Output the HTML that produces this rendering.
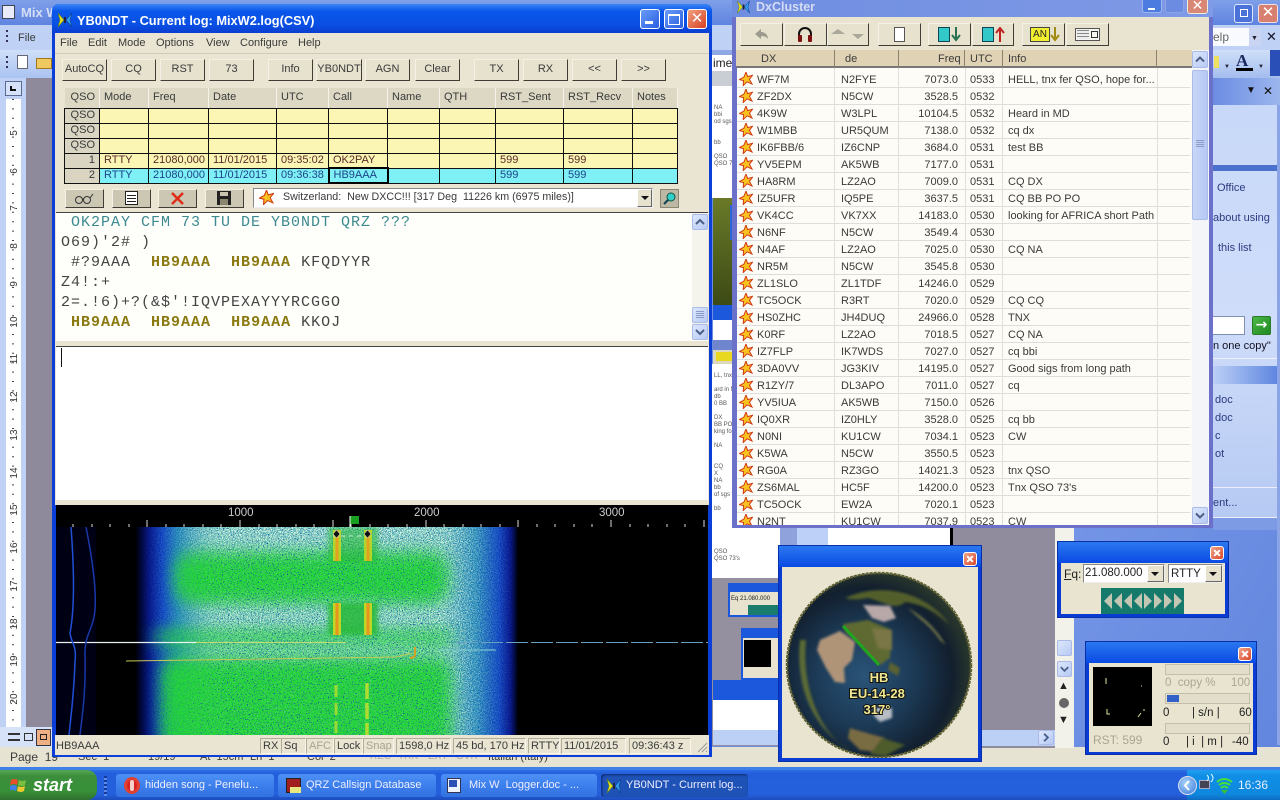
<!DOCTYPE html>
<html><head><meta charset="utf-8"><title>MixW</title>
<style>
*{box-sizing:border-box}
html{background:#6d8fe2}
html,body{margin:0;padding:0;width:1280px;height:800px;overflow:hidden;font:11px "Liberation Sans",sans-serif;color:#222}
body{background:#6d8fe2;filter:blur(.3px)}
.a,.b,.t,.sb,.cl{position:absolute}
.t{white-space:pre;line-height:14px}
.b{background:#e6e2ce;border:1px solid;border-color:#f4f2e6 #3f3d34 #3f3d34 #f4f2e6;text-align:center;color:#3a3a3a;font-size:11px;line-height:19px;white-space:pre}
.sb{background:linear-gradient(135deg,#dde7fd,#b7c9f3);border:1px solid #a9bbe6;border-radius:2px}
.cl{background:linear-gradient(135deg,#f0a58c,#d8482a);border:1px solid #fff;border-radius:3px;width:14px;height:14px}
.cl:after{content:"";position:absolute;left:2px;top:5px;width:8px;height:2px;background:#fff;transform:rotate(45deg)}
.cl:before{content:"";position:absolute;left:2px;top:5px;width:8px;height:2px;background:#fff;transform:rotate(-45deg)}
table{border-collapse:collapse;table-layout:fixed;position:absolute;left:64px;top:88px;width:613px;font-size:11px}
td,th{padding:0 4px;height:15px;border:1px solid #111;font-weight:normal;text-align:left;white-space:nowrap;overflow:hidden;line-height:13px}
th{height:20px;background:#dcd8c4;border:0;border-right:1px solid #f5f3e8;border-bottom:1px solid #111;color:#3a3a3a;font-size:11px}
.h{background:#d9d5c2;text-align:right;color:#3a3a3a;border-color:#111}
.y td{background:#fbf6b4;color:#5a2a2a}.y td.h{background:#d9d5c2;color:#3a3a3a}
.c td{background:#7ff0f6;color:#1c4488}.c td.h{background:#d9d5c2;color:#3a3a3a}
.r{position:absolute;left:0;width:453px;height:17px;border-bottom:1px solid #ddd;font-size:11px;line-height:17px;color:#3a3a3a;white-space:nowrap}
.r span{position:absolute;top:1px}
.r svg{position:absolute;left:2px;top:1px}
.r span:nth-of-type(1){left:20px}.r span:nth-of-type(2){left:104px}.r span:nth-of-type(3){width:60px;left:161px;text-align:right}.r span:nth-of-type(4){left:233px}.r span:nth-of-type(5){left:271px}
.m{font:15px/20px "Liberation Mono",monospace;letter-spacing:1px;color:#444;white-space:pre;position:absolute;left:61px}
.m b{color:#8b7a12}
.st{position:absolute;top:738px;height:16px;line-height:15px;font-size:11px;color:#3a3a3a;border:1px solid;border-color:#b0ac98 #f8f6ec #f8f6ec #b0ac98;white-space:pre;padding:0 2px}
.w{font-size:11px;color:#3a3a3a}
.tp{color:#2a3a80;font-size:11px}
.task{position:absolute;top:774px;height:23px;border-radius:3px;background:linear-gradient(#4c90f6,#3a7cea 60%,#3272e0);color:#eef;font-size:11px;line-height:23px;white-space:pre}
.d{position:absolute;font-size:6px;line-height:7px;color:#555;white-space:pre}
</style></head><body>
<svg width="0" height="0" style="position:absolute"><defs>
<symbol id="s" viewBox="0 0 14 14"><polygon points="7,0 8.6,4.6 13.6,3.2 10.4,7.2 13,12 8,9.8 4.2,13.6 4.6,8.6 .4,7.6 5,5" fill="#fbc320" stroke="#d03a14" stroke-width="1"/></symbol>
<symbol id="bf" viewBox="0 0 16 16"><path d="M1 1L7 8L1 15L3 8Z" fill="#e8e020" stroke="#608020" stroke-width=".6"/><path d="M15 1L9 8L15 15L13 8Z" fill="#30a0f0" stroke="#104090" stroke-width=".6"/><rect x="7" y="5" width="2" height="6" fill="#224"/></symbol>
<symbol id="up" viewBox="0 0 14 14"><path d="M3 9L7 5L11 9" fill="none" stroke="#4a5f88" stroke-width="2"/></symbol>
<symbol id="dn" viewBox="0 0 14 14"><path d="M3 5L7 9L11 5" fill="none" stroke="#4a5f88" stroke-width="2"/></symbol>
</defs></svg>

<!-- Word background -->
<div class="a" style="left:0;top:0;width:1280px;height:25px;background:linear-gradient(#7f9fe8,#5f84e0)"></div>
<div class="a" style="left:0;top:25px;width:1280px;height:25px;background:#bfd2f6"></div>
<div class="a" style="left:0;top:50px;width:1280px;height:28px;background:linear-gradient(#cfdff9,#a9c2f0)"></div>
<div class="a" style="left:2px;top:5px;width:13px;height:14px;background:#e8ecf8;border:1px solid #445"></div>
<div class="t" style="left:21px;top:6px;color:#d5def5;font-size:13px;font-weight:bold">Mix W</div>
<div class="a" style="left:6px;top:30px;width:2px;height:14px;background:repeating-linear-gradient(#335 0 2px,transparent 2px 5px)"></div>
<div class="t w" style="left:18px;top:31px">File</div>
<div class="a" style="left:6px;top:56px;width:2px;height:14px;background:repeating-linear-gradient(#335 0 2px,transparent 2px 5px)"></div>
<div class="a" style="left:17px;top:55px;width:11px;height:14px;background:#fff;border:1px solid #667"></div>
<div class="a" style="left:36px;top:58px;width:16px;height:11px;background:#f0c860;border:1px solid #a07820"></div>
<div class="a" style="left:0;top:78px;width:26px;height:650px;background:#bfd2f6"></div>
<div class="a" style="left:5px;top:81px;width:17px;height:15px;background:#d5e2f9;border:1px solid #5a6a90"></div>
<div class="a" style="left:10px;top:86px;width:6px;height:5px;border-left:2px solid #111;border-bottom:2px solid #111"></div>
<div class="a" style="left:6px;top:99px;width:15px;height:628px;background:#fff"></div>
<div class="a" style="left:26px;top:78px;width:26px;height:650px;background:#8f8a9b"></div>
<svg class="a" style="left:6px;top:99px" width="15" height="628"><g font-family="Liberation Sans" font-size="10" fill="#333" text-anchor="middle">
<text transform="translate(11,34) rotate(-90)">5</text><text transform="translate(11,72) rotate(-90)">6</text><text transform="translate(11,109) rotate(-90)">7</text><text transform="translate(11,147) rotate(-90)">8</text><text transform="translate(11,185) rotate(-90)">9</text><text transform="translate(11,223) rotate(-90)">10</text><text transform="translate(11,260) rotate(-90)">11</text><text transform="translate(11,298) rotate(-90)">12</text><text transform="translate(11,336) rotate(-90)">13</text><text transform="translate(11,374) rotate(-90)">14</text><text transform="translate(11,411) rotate(-90)">15</text><text transform="translate(11,449) rotate(-90)">16</text><text transform="translate(11,487) rotate(-90)">17</text><text transform="translate(11,525) rotate(-90)">18</text><text transform="translate(11,562) rotate(-90)">19</text><text transform="translate(11,600) rotate(-90)">20</text></g>
<path d="M7 0V628" stroke="#444" stroke-width="2" stroke-dasharray="1 8.4"/></svg>
<div class="a" style="left:0;top:727px;width:52px;height:21px;background:#d6e2f8"></div>
<div class="a" style="left:8px;top:733px;width:12px;height:8px;border-top:2px solid #333;border-bottom:2px solid #333"></div>
<div class="a" style="left:24px;top:733px;width:9px;height:8px;border:1px solid #333"></div>
<div class="a" style="left:36px;top:729px;width:15px;height:17px;background:#efb183;border:1px solid #334"></div>
<div class="a" style="left:40px;top:734px;width:7px;height:6px;border:1px solid #222"></div>
<!-- word status -->
<div class="a" style="left:0;top:747px;width:1280px;height:21px;background:#e7e3d2"></div>
<div class="a" style="left:0;top:767px;width:1280px;height:3px;background:#3f7fe8"></div>
<div class="t w" style="left:10px;top:750px;font-size:12px">Page  19</div>
<div class="t w" style="left:78px;top:750px">Sec  1</div><div class="t w" style="left:148px;top:750px">19/19</div>
<div class="t w" style="left:200px;top:750px">At  15cm</div><div class="t w" style="left:250px;top:750px">Ln  1</div><div class="t w" style="left:307px;top:750px">Col  2</div>
<div class="t" style="left:370px;top:750px;color:#aaa;font-size:10px">REC</div><div class="t" style="left:398px;top:750px;color:#aaa;font-size:10px">TRK</div><div class="t" style="left:428px;top:750px;color:#aaa;font-size:10px">EXT</div><div class="t" style="left:456px;top:750px;color:#aaa;font-size:10px">OVR</div><div class="t w" style="left:488px;top:750px">Italian (Italy)</div>

<!-- doc sliver -->
<div class="a" style="left:712px;top:50px;width:24px;height:5px;background:#8fa8e4"></div>
<div class="a" style="left:712px;top:55px;width:24px;height:16px;background:#fff"></div>
<div class="t" style="left:713px;top:56px;font-size:12px">imes</div>
<div class="a" style="left:712px;top:71px;width:24px;height:15px;background:#c9cdd4"></div>
<div class="a" style="left:712px;top:86px;width:24px;height:112px;background:#fff"></div>
<div class="d" style="left:714px;top:105px">NA
bbi
od sgs f


bb

QSO
QSO 7</div>
<div class="a" style="left:713px;top:198px;width:23px;height:107px;background:linear-gradient(#6a7a28,#3c4a14)"></div>
<div class="a" style="left:730px;top:205px;width:2px;height:35px;background:#2a66d8"></div>
<div class="a" style="left:713px;top:305px;width:23px;height:15px;background:#1c58dc"></div>
<div class="a" style="left:713px;top:320px;width:23px;height:20px;background:#fff"></div>
<div class="a" style="left:713px;top:340px;width:23px;height:10px;background:#6f86cf"></div>
<div class="a" style="left:713px;top:350px;width:23px;height:14px;background:#dcd8c0"></div>
<div class="a" style="left:716px;top:352px;width:16px;height:9px;background:#e8d820"></div>
<div class="a" style="left:712px;top:364px;width:24px;height:214px;background:#fff"></div>
<div class="d" style="left:714px;top:373px">LL, tnx f

ard in M
db
0 BB

DX
BB PO
king for

NA


CQ
X
NA
bb
of sgs f

bb


QSO
QSO 73</div>
<div class="a" style="left:712px;top:520px;width:68px;height:58px;background:#fff"></div>
<div class="d" style="left:714px;top:549px">QSO
QSO 73's</div>
<div class="a" style="left:712px;top:578px;width:70px;height:168px;background:#9490a0"></div>
<div class="a" style="left:728px;top:583px;width:52px;height:34px;background:#1c58dc"></div>
<div class="a" style="left:730px;top:592px;width:50px;height:23px;background:#e6e2ce"></div>
<div class="t" style="left:731px;top:592px;font-size:6px">Eq 21.080.000</div>
<div class="a" style="left:748px;top:605px;width:32px;height:10px;background:#1a7c6c"></div>
<div class="a" style="left:741px;top:628px;width:41px;height:52px;background:#1c58dc"></div>
<div class="a" style="left:743px;top:638px;width:39px;height:40px;background:#e6e2ce"></div>
<div class="a" style="left:744px;top:640px;width:27px;height:27px;background:#000"></div>
<div class="a" style="left:713px;top:680px;width:68px;height:20px;background:#1c58dc"></div>
<div class="a" style="left:713px;top:700px;width:68px;height:30px;background:#fff"></div>
<div class="a" style="left:713px;top:730px;width:70px;height:15px;background:#bcd0f6"></div>
<!-- between -->
<div class="a" style="left:780px;top:526px;width:17px;height:20px;background:#8fa2dc"></div>
<div class="a" style="left:797px;top:526px;width:31px;height:20px;background:#bcd0f8"></div>
<div class="a" style="left:828px;top:526px;width:122px;height:20px;background:#fff"></div>
<div class="a" style="left:950px;top:526px;width:3px;height:20px;background:#000"></div>
<div class="a" style="left:953px;top:526px;width:102px;height:222px;background:#918c9d"></div>
<div class="a" style="left:982px;top:730px;width:78px;height:16px;background:#bcd0f6"></div>
<div class="sb" style="left:1038px;top:730px;width:16px;height:15px"><svg width="14" height="13" style="transform:rotate(90deg)"><use href="#up"/></svg></div>
<div class="a" style="left:1055px;top:526px;width:19px;height:222px;background:#f2f2ea"></div>
<div class="sb" style="left:1057px;top:640px;width:15px;height:16px"></div>
<div class="sb" style="left:1057px;top:661px;width:15px;height:16px"><svg width="13" height="14"><use href="#dn"/></svg></div>
<div class="t" style="left:1058px;top:679px;font-size:11px">&#9650;</div>
<div class="a" style="left:1059px;top:698px;width:10px;height:10px;border-radius:50%;background:#666"></div>
<div class="t" style="left:1058px;top:713px;font-size:11px">&#9660;</div>
<div class="a" style="left:1074px;top:526px;width:206px;height:221px;background:linear-gradient(120deg,#7495e6,#6286de)"></div>

<!-- Word right -->
<div class="a" style="left:1234px;top:4px;width:19px;height:19px;background:#4a72d8;border:1px solid #dfe7fb;border-radius:3px"></div>
<div class="a" style="left:1240px;top:9px;width:8px;height:8px;border:1.5px solid #fff"></div>
<div class="a" style="left:1258px;top:4px;width:20px;height:19px;background:#d88070;border:1px solid #f4e0e0;border-radius:3px;color:#fff;font-size:15px;line-height:16px;text-align:center">&#10005;</div>
<div class="a" style="left:1213px;top:28px;width:36px;height:18px;background:#f8fafe"></div>
<div class="t" style="left:1213px;top:30px;color:#666;font-size:12px">elp</div>
<div class="a" style="left:1249px;top:28px;width:12px;height:18px;background:#c8d4f2"></div>
<div class="t" style="left:1251px;top:32px;font-size:7px;color:#223">&#9660;</div>
<div class="t" style="left:1266px;top:30px;font-size:13px;color:#112">&#10005;</div>
<div class="a" style="left:1213px;top:50px;width:67px;height:28px;background:linear-gradient(#cfdff9,#a4bdee)"></div>
<div class="a" style="left:1214px;top:56px;width:5px;height:12px;background:#f0e060"></div>
<div class="t" style="left:1224px;top:60px;font-size:6px;color:#223">&#9660;</div>
<div class="t" style="left:1236px;top:52px;font:bold 17px 'Liberation Serif',serif;line-height:17px;color:#1a2860">A</div>
<div class="a" style="left:1236px;top:68px;width:17px;height:3px;background:#000"></div>
<div class="t" style="left:1258px;top:60px;font-size:6px;color:#223">&#9660;</div>
<div class="a" style="left:1270px;top:50px;width:10px;height:26px;background:#2a50b8"></div>
<div class="a" style="left:1213px;top:78px;width:67px;height:27px;background:linear-gradient(90deg,#6b8de2,#9cb6ee)"></div>
<div class="t" style="left:1246px;top:84px;font-size:10px;color:#111">&#9660;</div>
<div class="t" style="left:1263px;top:84px;font-size:12px;color:#111">&#10005;</div>
<div class="a" style="left:1213px;top:105px;width:64px;height:425px;background:linear-gradient(#c8d8f8,#cfddfa 50%,#b4c8f2)"></div>
<div class="a" style="left:1277px;top:105px;width:3px;height:640px;background:#8aa4e6"></div>
<div class="a" style="left:1213px;top:165px;width:64px;height:6px;background:#4a72cc"></div>
<div class="t tp" style="left:1217px;top:181px">Office</div>
<div class="t tp" style="left:1213px;top:211px">about using</div>
<div class="t tp" style="left:1218px;top:241px">this list</div>
<div class="a" style="left:1213px;top:316px;width:32px;height:19px;background:#fff;border:1px solid #8090b0;border-left:0"></div>
<div class="a" style="left:1252px;top:316px;width:19px;height:19px;background:linear-gradient(135deg,#4cb848,#1e8a20);border:1px solid #2a7a2a;border-radius:2px;color:#fff;font:bold 14px/16px 'DejaVu Sans',sans-serif;text-align:center">&#8594;</div>
<div class="t" style="left:1213px;top:339px;color:#112;font-size:11px">n one copy"</div>
<div class="a" style="left:1213px;top:358px;width:64px;height:1px;background:#eef"></div>
<div class="a" style="left:1213px;top:366px;width:64px;height:18px;background:linear-gradient(90deg,#bcd0f6,#5f86e0)"></div>
<div class="t tp" style="left:1215px;top:393px">doc</div>
<div class="t tp" style="left:1215px;top:411px">doc</div>
<div class="t tp" style="left:1215px;top:429px">c</div>
<div class="t tp" style="left:1215px;top:447px">ot</div>
<div class="a" style="left:1213px;top:487px;width:64px;height:1px;background:#eef"></div>
<div class="t tp" style="left:1213px;top:496px">ent...</div>
<div class="a" style="left:1213px;top:517px;width:64px;height:1px;background:#eef"></div>
<div class="a" style="left:1213px;top:518px;width:64px;height:12px;background:#7d9ae4"></div>

<!-- DxCluster -->
<div class="a" style="left:732px;top:-20px;width:481px;height:548px;background:#6b70c9;border-radius:6px 6px 0 0"></div>
<div class="a" style="left:732px;top:0;width:481px;height:17px;background:linear-gradient(90deg,#6f8de0,#7f9ae6)"></div>
<svg class="a" style="left:736px;top:0" width="15" height="14"><use href="#bf"/></svg>
<div class="t" style="left:756px;top:0;color:#d3dcf4;font:bold 12.5px/14px 'Liberation Sans',sans-serif">DxCluster</div>
<div class="a" style="left:1142px;top:-3px;width:20px;height:16px;background:#4d7ce0;border-radius:3px;border:1px solid #9db6ee"></div>
<div class="a" style="left:1148px;top:8px;width:7px;height:2px;background:#fff"></div>
<div class="a" style="left:1165px;top:-3px;width:19px;height:16px;background:#6b8ce0;border-radius:3px;border:1px solid #8aa4e6"></div>
<div class="a" style="left:1187px;top:-3px;width:21px;height:17px;background:#d98876;border-radius:3px;border:1px solid #eed;color:#fff;font-size:14px;line-height:15px;text-align:center">&#10005;</div>
<div class="a" style="left:736px;top:17px;width:473px;height:33px;background:#e8e4d0"></div>
<!-- dx toolbar -->
<div class="b" style="left:740px;top:23px;width:43px;height:23px"></div>
<svg class="a" style="left:753px;top:27px" width="18" height="14"><path d="M8 2L2 7L8 12V9C11 9 14 10 15 12C15 8 12 5 8 5Z" fill="#9b9a8c"/></svg>
<div class="b" style="left:784px;top:23px;width:43px;height:23px"></div>
<svg class="a" style="left:796px;top:26px" width="18" height="17"><path d="M3 11V8A6 6 0 0 1 15 8V11" fill="none" stroke="#111" stroke-width="2"/><rect x="2" y="9" width="4" height="7" rx="1" fill="#7a1010"/><rect x="12" y="9" width="4" height="7" rx="1" fill="#7a1010"/></svg>
<div class="b" style="left:827px;top:23px;width:42px;height:23px"></div>
<svg class="a" style="left:830px;top:28px" width="36" height="12"><path d="M1 6L8 1L15 6H34L28 11L22 6" fill="#aaa89a"/></svg>
<div class="b" style="left:878px;top:23px;width:43px;height:23px"></div>
<div class="a" style="left:894px;top:27px;width:11px;height:15px;background:#fff;border:1px solid #555"></div>
<div class="b" style="left:928px;top:23px;width:43px;height:23px"></div>
<div class="a" style="left:938px;top:27px;width:12px;height:15px;background:#32c8c8;border:1px solid #145"></div>
<svg class="a" style="left:951px;top:27px" width="10" height="15"><path d="M5 0V11M1 8L5 13L9 8" fill="none" stroke="#287050" stroke-width="2"/></svg>
<div class="b" style="left:972px;top:23px;width:42px;height:23px"></div>
<div class="a" style="left:982px;top:27px;width:12px;height:15px;background:#32c8c8;border:1px solid #145"></div>
<svg class="a" style="left:995px;top:27px" width="10" height="15"><path d="M5 15V3M1 6L5 1L9 6" fill="none" stroke="#c02020" stroke-width="2"/></svg>
<div class="b" style="left:1022px;top:23px;width:43px;height:23px"></div>
<div class="a" style="left:1030px;top:27px;width:20px;height:15px;background:#f2ee30;border:1px solid #444;font-size:10px;line-height:13px;text-align:center">AN</div>
<svg class="a" style="left:1050px;top:27px" width="10" height="15"><path d="M5 0V11M1 8L5 13L9 8" fill="none" stroke="#a08a10" stroke-width="2"/></svg>
<div class="b" style="left:1066px;top:23px;width:43px;height:23px"></div>
<div class="a" style="left:1075px;top:28px;width:25px;height:13px;background:#f5f5f0;border:1px solid #555"></div>
<div class="a" style="left:1077px;top:30px;width:12px;height:9px;background:repeating-linear-gradient(#888 0 1px,#eee 1px 3px)"></div>
<div class="a" style="left:1091px;top:31px;width:7px;height:7px;border:1px solid #333"></div>
<!-- dx list -->
<div class="a" style="left:736px;top:50px;width:473px;height:18px;background:#e0d3b5;border-bottom:2px solid #777"></div>
<div class="t" style="left:761px;top:52px;color:#3a3a3a;font-size:11px">DX</div>
<div class="a" style="left:834px;top:50px;width:1px;height:18px;background:#8a826e"></div>
<div class="t" style="left:845px;top:52px;color:#3a3a3a;font-size:11px">de</div>
<div class="a" style="left:898px;top:50px;width:1px;height:18px;background:#8a826e"></div>
<div class="t" style="left:938px;top:52px;color:#3a3a3a;font-size:11px">Freq</div>
<div class="a" style="left:964px;top:50px;width:1px;height:18px;background:#8a826e"></div>
<div class="t" style="left:970px;top:52px;color:#3a3a3a;font-size:11px">UTC</div>
<div class="a" style="left:1002px;top:50px;width:1px;height:18px;background:#8a826e"></div>
<div class="t" style="left:1008px;top:52px;color:#3a3a3a;font-size:11px">Info</div>
<div class="a" style="left:1156px;top:50px;width:1px;height:18px;background:#8a826e"></div>
<div class="a" style="left:737px;top:68px;width:455px;height:457px;background:#fdfcf6;overflow:hidden">
<div style="position:absolute;left:97px;top:0;width:1px;height:457px;background:#e0e0da"></div>
<div style="position:absolute;left:161px;top:0;width:1px;height:457px;background:#e0e0da"></div>
<div style="position:absolute;left:228px;top:0;width:1px;height:457px;background:#e0e0da"></div>
<div style="position:absolute;left:265px;top:0;width:1px;height:457px;background:#e0e0da"></div>
<div style="position:absolute;left:420px;top:0;width:1px;height:457px;background:#e0e0da"></div>
<div class="r" style="top:3px"><svg width="14" height="14"><use href="#s"/></svg><span>WF7M</span><span>N2FYE</span><span>7073.0</span><span>0533</span><span>HELL, tnx fer QSO, hope for...</span></div>
<div class="r" style="top:20px"><svg width="14" height="14"><use href="#s"/></svg><span>ZF2DX</span><span>N5CW</span><span>3528.5</span><span>0532</span><span></span></div>
<div class="r" style="top:37px"><svg width="14" height="14"><use href="#s"/></svg><span>4K9W</span><span>W3LPL</span><span>10104.5</span><span>0532</span><span>Heard in MD</span></div>
<div class="r" style="top:54px"><svg width="14" height="14"><use href="#s"/></svg><span>W1MBB</span><span>UR5QUM</span><span>7138.0</span><span>0532</span><span>cq dx</span></div>
<div class="r" style="top:71px"><svg width="14" height="14"><use href="#s"/></svg><span>IK6FBB/6</span><span>IZ6CNP</span><span>3684.0</span><span>0531</span><span>test BB</span></div>
<div class="r" style="top:88px"><svg width="14" height="14"><use href="#s"/></svg><span>YV5EPM</span><span>AK5WB</span><span>7177.0</span><span>0531</span><span></span></div>
<div class="r" style="top:105px"><svg width="14" height="14"><use href="#s"/></svg><span>HA8RM</span><span>LZ2AO</span><span>7009.0</span><span>0531</span><span>CQ DX</span></div>
<div class="r" style="top:122px"><svg width="14" height="14"><use href="#s"/></svg><span>IZ5UFR</span><span>IQ5PE</span><span>3637.5</span><span>0531</span><span>CQ BB PO PO</span></div>
<div class="r" style="top:139px"><svg width="14" height="14"><use href="#s"/></svg><span>VK4CC</span><span>VK7XX</span><span>14183.0</span><span>0530</span><span>looking for AFRICA short Path</span></div>
<div class="r" style="top:156px"><svg width="14" height="14"><use href="#s"/></svg><span>N6NF</span><span>N5CW</span><span>3549.4</span><span>0530</span><span></span></div>
<div class="r" style="top:173px"><svg width="14" height="14"><use href="#s"/></svg><span>N4AF</span><span>LZ2AO</span><span>7025.0</span><span>0530</span><span>CQ NA</span></div>
<div class="r" style="top:190px"><svg width="14" height="14"><use href="#s"/></svg><span>NR5M</span><span>N5CW</span><span>3545.8</span><span>0530</span><span></span></div>
<div class="r" style="top:207px"><svg width="14" height="14"><use href="#s"/></svg><span>ZL1SLO</span><span>ZL1TDF</span><span>14246.0</span><span>0529</span><span></span></div>
<div class="r" style="top:224px"><svg width="14" height="14"><use href="#s"/></svg><span>TC5OCK</span><span>R3RT</span><span>7020.0</span><span>0529</span><span>CQ CQ</span></div>
<div class="r" style="top:241px"><svg width="14" height="14"><use href="#s"/></svg><span>HS0ZHC</span><span>JH4DUQ</span><span>24966.0</span><span>0528</span><span>TNX</span></div>
<div class="r" style="top:258px"><svg width="14" height="14"><use href="#s"/></svg><span>K0RF</span><span>LZ2AO</span><span>7018.5</span><span>0527</span><span>CQ NA</span></div>
<div class="r" style="top:275px"><svg width="14" height="14"><use href="#s"/></svg><span>IZ7FLP</span><span>IK7WDS</span><span>7027.0</span><span>0527</span><span>cq bbi</span></div>
<div class="r" style="top:292px"><svg width="14" height="14"><use href="#s"/></svg><span>3DA0VV</span><span>JG3KIV</span><span>14195.0</span><span>0527</span><span>Good sigs from long path</span></div>
<div class="r" style="top:309px"><svg width="14" height="14"><use href="#s"/></svg><span>R1ZY/7</span><span>DL3APO</span><span>7011.0</span><span>0527</span><span>cq</span></div>
<div class="r" style="top:326px"><svg width="14" height="14"><use href="#s"/></svg><span>YV5IUA</span><span>AK5WB</span><span>7150.0</span><span>0526</span><span></span></div>
<div class="r" style="top:343px"><svg width="14" height="14"><use href="#s"/></svg><span>IQ0XR</span><span>IZ0HLY</span><span>3528.0</span><span>0525</span><span>cq bb</span></div>
<div class="r" style="top:360px"><svg width="14" height="14"><use href="#s"/></svg><span>N0NI</span><span>KU1CW</span><span>7034.1</span><span>0523</span><span>CW</span></div>
<div class="r" style="top:377px"><svg width="14" height="14"><use href="#s"/></svg><span>K5WA</span><span>N5CW</span><span>3550.5</span><span>0523</span><span></span></div>
<div class="r" style="top:394px"><svg width="14" height="14"><use href="#s"/></svg><span>RG0A</span><span>RZ3GO</span><span>14021.3</span><span>0523</span><span>tnx QSO</span></div>
<div class="r" style="top:411px"><svg width="14" height="14"><use href="#s"/></svg><span>ZS6MAL</span><span>HC5F</span><span>14200.0</span><span>0523</span><span>Tnx QSO 73's</span></div>
<div class="r" style="top:428px"><svg width="14" height="14"><use href="#s"/></svg><span>TC5OCK</span><span>EW2A</span><span>7020.1</span><span>0523</span><span></span></div>
<div class="r" style="top:445px"><svg width="14" height="14"><use href="#s"/></svg><span>N2NT</span><span>KU1CW</span><span>7037.9</span><span>0523</span><span>CW</span></div>
</div>
<div class="a" style="left:1192px;top:50px;width:17px;height:475px;background:#f3f5f8"></div>
<div class="sb" style="left:1192px;top:51px;width:16px;height:17px"><svg width="14" height="15"><use href="#up"/></svg></div>
<div class="sb" style="left:1192px;top:70px;width:16px;height:150px;background:linear-gradient(90deg,#c8d6f8,#b4c8f4)"></div>
<div class="a" style="left:1196px;top:140px;width:8px;height:7px;background:repeating-linear-gradient(#8a9cc8 0 1px,transparent 1px 2px)"></div>
<div class="sb" style="left:1192px;top:507px;width:16px;height:17px"><svg width="14" height="15"><use href="#dn"/></svg></div>

<!-- Main MixW window -->
<div class="a" style="left:52px;top:4px;width:660px;height:753px;background:#0c3fd8;border-radius:7px 7px 0 0"></div>
<div class="a" style="left:52px;top:4px;width:660px;height:29px;border-radius:7px 7px 0 0;background:linear-gradient(#3a86f6,#0a56ea 25%,#0a50e4 70%,#0a3ed0)"></div>
<svg class="a" style="left:57px;top:12px" width="16" height="16"><use href="#bf"/></svg>
<div class="t" style="left:77px;top:13px;color:#fff;font:bold 12.8px/16px 'Liberation Sans',sans-serif">YB0NDT - Current log: MixW2.log(CSV)</div>
<div class="a" style="left:640px;top:9px;width:20px;height:20px;background:linear-gradient(135deg,#6a9cf8,#2a5ee0);border:1px solid #fff;border-radius:3px"></div>
<div class="a" style="left:645px;top:21px;width:8px;height:3px;background:#fff"></div>
<div class="a" style="left:664px;top:9px;width:20px;height:20px;background:linear-gradient(135deg,#6a9cf8,#2a5ee0);border:1px solid #fff;border-radius:3px"></div>
<div class="a" style="left:668px;top:14px;width:12px;height:11px;border:1px solid #fff;border-top:2px solid #fff"></div>
<div class="a" style="left:687px;top:9px;width:20px;height:20px;background:linear-gradient(135deg,#f0a080,#d84020);border:1px solid #fff;border-radius:3px;color:#fff;font-size:15px;line-height:17px;text-align:center">&#10005;</div>
<div class="a" style="left:55px;top:33px;width:654px;height:472px;background:#e9e5d2"></div>
<div class="a" style="left:55px;top:53px;width:654px;height:1px;background:#cfcbb7"></div>
<div class="t w" style="left:60px;top:36px">File</div><div class="t w" style="left:88px;top:36px">Edit</div><div class="t w" style="left:118px;top:36px">Mode</div><div class="t w" style="left:156px;top:36px">Options</div><div class="t w" style="left:206px;top:36px">View</div><div class="t w" style="left:240px;top:36px">Configure</div><div class="t w" style="left:298px;top:36px">Help</div>
<div class="b" style="left:62px;top:59px;width:45px;height:22px">AutoCQ</div>
<div class="b" style="left:111px;top:59px;width:45px;height:22px">CQ</div>
<div class="b" style="left:160px;top:59px;width:45px;height:22px">RST</div>
<div class="b" style="left:209px;top:59px;width:45px;height:22px">73</div>
<div class="b" style="left:268px;top:59px;width:45px;height:22px">Info</div>
<div class="b" style="left:316px;top:59px;width:46px;height:22px">YB0NDT</div>
<div class="b" style="left:365px;top:59px;width:45px;height:22px">AGN</div>
<div class="b" style="left:415px;top:59px;width:45px;height:22px">Clear</div>
<div class="b" style="left:474px;top:59px;width:45px;height:22px">TX</div>
<div class="b" style="left:523px;top:59px;width:45px;height:22px">RX</div>
<div class="b" style="left:572px;top:59px;width:45px;height:22px">&lt;&lt;</div>
<div class="b" style="left:621px;top:59px;width:45px;height:22px">&gt;&gt;</div>
<table><colgroup><col style="width:35px"><col style="width:49px"><col style="width:60px"><col style="width:68px"><col style="width:52px"><col style="width:59px"><col style="width:52px"><col style="width:56px"><col style="width:68px"><col style="width:69px"><col style="width:45px"></colgroup>
<tr><th style="text-align:right">QSO</th><th>Mode</th><th>Freq</th><th>Date</th><th>UTC</th><th>Call</th><th>Name</th><th>QTH</th><th>RST_Sent</th><th>RST_Recv</th><th>Notes</th></tr>
<tr class="y"><td class="h">QSO</td><td></td><td></td><td></td><td></td><td></td><td></td><td></td><td></td><td></td><td></td></tr>
<tr class="y"><td class="h">QSO</td><td></td><td></td><td></td><td></td><td></td><td></td><td></td><td></td><td></td><td></td></tr>
<tr class="y"><td class="h">QSO</td><td></td><td></td><td></td><td></td><td></td><td></td><td></td><td></td><td></td><td></td></tr>
<tr class="y"><td class="h">1</td><td>RTTY</td><td>21080,000</td><td>11/01/2015</td><td>09:35:02</td><td>OK2PAY</td><td></td><td></td><td>599</td><td>599</td><td></td></tr>
<tr class="c"><td class="h">2</td><td>RTTY</td><td>21080,000</td><td>11/01/2015</td><td>09:36:38</td><td style="border:2px solid #000">HB9AAA</td><td></td><td></td><td>599</td><td>599</td><td></td></tr>
</table>
<div class="b" style="left:65px;top:189px;width:39px;height:19px;background:#cbc7b3"></div>
<svg class="a" style="left:74px;top:191px" width="22" height="14"><g fill="none" stroke="#333"><circle cx="5" cy="9" r="3.5"/><circle cx="13" cy="9" r="3.5"/><path d="M8 8L10 8M16 7L19 3"/></g></svg>
<div class="b" style="left:112px;top:189px;width:39px;height:19px;background:#cbc7b3"></div>
<div class="a" style="left:125px;top:191px;width:13px;height:14px;background:#fff;border:1px solid #222"></div>
<div class="a" style="left:127px;top:195px;width:9px;height:7px;background:repeating-linear-gradient(#222 0 1px,#fff 1px 3px)"></div>
<div class="b" style="left:158px;top:189px;width:39px;height:19px;background:#cbc7b3"></div>
<svg class="a" style="left:170px;top:191px" width="15" height="15"><path d="M2 2L13 13M13 2L2 13" stroke="#e02a18" stroke-width="2.4"/></svg>
<div class="b" style="left:205px;top:189px;width:39px;height:19px;background:#cbc7b3"></div>
<div class="a" style="left:217px;top:191px;width:14px;height:14px;background:#222"></div>
<div class="a" style="left:220px;top:192px;width:8px;height:4px;background:#c8c4b0"></div>
<div class="a" style="left:220px;top:199px;width:8px;height:6px;background:#8a8672"></div>
<div class="a" style="left:253px;top:188px;width:400px;height:20px;background:#fff;border:1px solid;border-color:#888 #eee #eee #888"></div>
<svg class="a" style="left:259px;top:190px" width="15" height="15"><use href="#s"/></svg>
<div class="t" style="left:283px;top:190px;color:#3a3a3a;font-size:10.7px">Switzerland:  New DXCC!!! [317 Deg  11226 km (6975 miles)]</div>
<div class="a" style="left:637px;top:189px;width:15px;height:18px;background:#e6e2ce;border:1px solid;border-color:#fff #666 #666 #fff"></div>
<div class="a" style="left:641px;top:196px;border:4px solid transparent;border-top:4px solid #111"></div>
<div class="a" style="left:660px;top:189px;width:19px;height:19px;background:#bcb8a4;border:1px solid #8a8672"></div>
<svg class="a" style="left:662px;top:191px" width="15" height="15"><circle cx="9" cy="6" r="4" fill="#30d0c8" stroke="#154"/><path d="M6 9L2 13" stroke="#145" stroke-width="2.2"/></svg>
<!-- rx -->
<div class="a" style="left:56px;top:212px;width:652px;height:129px;background:#fefefa;border-top:1px solid #444"></div>
<div class="m" style="top:213px;color:#3c8a90"> OK2PAY CFM 73 TU DE YB0NDT QRZ ???</div>
<div class="m" style="top:233px">O69)'2# )</div>
<div class="m" style="top:253px"> #?9AAA  <b>HB9AAA</b>  <b>HB9AAA</b> KFQDYYR</div>
<div class="m" style="top:273px">Z4!:+</div>
<div class="m" style="top:293px">2=.!6)+?(&amp;$'!IQVPEXAYYYRCGGO</div>
<div class="m" style="top:313px"> <b>HB9AAA</b>  <b>HB9AAA</b>  <b>HB9AAA</b> KKOJ</div>
<div class="a" style="left:692px;top:213px;width:16px;height:127px;background:#f4f4ec"></div>
<div class="sb" style="left:692px;top:214px;width:16px;height:16px"><svg width="14" height="14"><use href="#up"/></svg></div>
<div class="sb" style="left:692px;top:307px;width:16px;height:16px"></div>
<div class="a" style="left:696px;top:311px;width:8px;height:7px;background:repeating-linear-gradient(#8a9cc8 0 1px,transparent 1px 2px)"></div>
<div class="sb" style="left:692px;top:324px;width:16px;height:16px"><svg width="14" height="14"><use href="#dn"/></svg></div>
<!-- tx -->
<div class="a" style="left:56px;top:346px;width:652px;height:154px;background:#fff;border-top:1px solid #444"></div>
<div class="a" style="left:61px;top:348px;width:1px;height:19px;background:#111"></div>
<!-- waterfall -->
<div class="a" style="left:56px;top:505px;width:652px;height:22px;background:#000"></div>
<div class="t" style="left:228px;top:506px;color:#ccc;font-size:11.5px">1000</div>
<div class="t" style="left:414px;top:506px;color:#ccc;font-size:11.5px">2000</div>
<div class="t" style="left:599px;top:506px;color:#ccc;font-size:11.5px">3000</div>
<svg class="a" style="left:56px;top:505px" width="652" height="22"><path d="M17 19v3M36 19v3M54 19v3M73 19v3M91 15v7M110 19v3M128 19v3M147 19v3M165 19v3M184 15v7M203 19v3M221 19v3M240 19v3M258 19v3M277 15v7M295 19v3M314 19v3M332 19v3M351 19v3M370 15v7M388 19v3M407 19v3M425 19v3M444 19v3M462 15v7M481 19v3M499 19v3M518 19v3M536 19v3M555 15v7M574 19v3M592 19v3M611 19v3M629 19v3M648 15v7" stroke="#ddd" stroke-width="1"/><path d="M294 11h9v8h-9z" fill="#18a020"/><path d="M294 11v11" stroke="#fff"/></svg>
<svg class="a" style="left:56px;top:527px" width="652" height="208">
<defs>
<linearGradient id="wf" x1="80" x2="462" gradientUnits="userSpaceOnUse">
<stop offset="0" stop-color="#000008"/><stop offset=".035" stop-color="#041488"/><stop offset=".07" stop-color="#0a40c0"/><stop offset=".11" stop-color="#1880b8"/><stop offset=".19" stop-color="#5cb8b8"/><stop offset=".8" stop-color="#5cb8b8"/><stop offset=".89" stop-color="#1880b8"/><stop offset=".95" stop-color="#0a40c0"/><stop offset=".98" stop-color="#041488"/><stop offset="1" stop-color="#000008"/>
</linearGradient>
<linearGradient id="al" x1="85" x2="462" gradientUnits="userSpaceOnUse">
<stop offset="0" stop-color="#fff" stop-opacity="0"/><stop offset=".1" stop-color="#fff" stop-opacity=".25"/><stop offset=".22" stop-color="#fff"/><stop offset=".8" stop-color="#fff"/><stop offset=".92" stop-color="#fff" stop-opacity=".25"/><stop offset="1" stop-color="#fff" stop-opacity="0"/>
</linearGradient>
<filter id="b2"><feGaussianBlur stdDeviation="2"/></filter>
<filter id="b8" x="-15%" y="-30%" width="130%" height="160%"><feGaussianBlur stdDeviation="8"/></filter>
<filter id="sp1" x="0" y="0" width="100%" height="100%" color-interpolation-filters="sRGB"><feTurbulence type="fractalNoise" baseFrequency=".9" numOctaves="2" seed="3"/><feColorMatrix type="matrix" values="0 0 0 0 .86 0 0 0 0 .97 0 0 0 0 .88 7 0 0 0 -3.1"/><feComposite in2="SourceAlpha" operator="in"/></filter>
<filter id="sp2" x="0" y="0" width="100%" height="100%" color-interpolation-filters="sRGB"><feTurbulence type="fractalNoise" baseFrequency=".8" numOctaves="2" seed="9"/><feColorMatrix type="matrix" values="0 0 0 0 .04 0 0 0 0 .3 0 0 0 0 .62 0 8 0 0 -4.9"/><feComposite in2="SourceAlpha" operator="in"/></filter>
<filter id="gr" x="-15%" y="-30%" width="130%" height="160%" color-interpolation-filters="sRGB"><feGaussianBlur stdDeviation="9" result="g"/><feTurbulence type="fractalNoise" baseFrequency=".7" numOctaves="2" seed="21"/><feColorMatrix type="matrix" values="0 0 0 0 .14 0 0 0 0 .84 0 0 0 0 .22 0 0 9 0 -3.1"/><feComposite in2="g" operator="in"/></filter>
</defs>
<rect width="652" height="208" fill="#000"/>
<rect x="0" y="0" width="40" height="208" fill="#000014"/>
<rect x="80" y="0" width="382" height="208" fill="url(#wf)"/>
<rect x="85" y="0" width="377" height="208" fill="url(#al)" filter="url(#sp1)"/>
<g filter="url(#b8)" fill="#28c840" opacity=".7"><rect x="122" y="28" width="268" height="46" rx="14"/><rect x="100" y="106" width="295" height="10"/><rect x="108" y="133" width="285" height="95" rx="10"/></g>
<g filter="url(#gr)"><rect x="122" y="28" width="268" height="46" rx="14" fill="#fff"/><rect x="100" y="106" width="295" height="10" fill="#fff"/><rect x="108" y="133" width="285" height="95" rx="10" fill="#fff"/></g>
<rect x="85" y="0" width="377" height="208" fill="url(#al)" filter="url(#sp2)"/>
<g>
<rect x="272" y="0" width="50" height="35" fill="#20b830" opacity=".55" filter="url(#b2)"/>
<rect x="272" y="76" width="50" height="32" fill="#20b830" opacity=".8" filter="url(#b2)"/>
<rect x="277" y="3" width="8" height="31" fill="#c8d820" opacity=".85"/><rect x="279.500" y="3" width="3" height="31" fill="#ef9420" opacity=".8"/>
<rect x="308" y="3" width="8" height="31" fill="#c8d820" opacity=".85"/><rect x="310.500" y="3" width="3" height="31" fill="#ef9420" opacity=".8"/>
<rect x="277" y="76" width="8" height="32" fill="#d0d820" opacity=".9"/><rect x="279.500" y="76" width="3" height="32" fill="#ef8820" opacity=".85"/>
<rect x="308" y="76" width="8" height="32" fill="#d0d820" opacity=".9"/><rect x="310.500" y="76" width="3" height="32" fill="#ef8820" opacity=".85"/>
<path d="M280 158V208" stroke="#b8e030" stroke-width="3" stroke-dasharray="12 6" opacity=".8"/><path d="M311 156V208" stroke="#c8e030" stroke-width="3.500" stroke-dasharray="16 4" opacity=".85"/>
<path d="M277 9h39" stroke="#fff" stroke-dasharray="4 4" opacity=".7"/>
<path d="M280.500 3l3.500 4l-3.500 4l-3.500-4zM311.500 3l3.500 4l-3.500 4l-3.500-4z" fill="#111" stroke="#fff" stroke-width=".5"/>
</g>
<path d="M0 115.500H140" stroke="#e8f0f0" stroke-width="1.2"/><path d="M140 115.500H290" stroke="#c8d878" stroke-width="1"/><path d="M400 115.500H652" stroke="#6aa0c0" stroke-width="1" stroke-dasharray="22 3"/>
<path d="M70 134L340 130L356 126" stroke="#c8c858" fill="none" stroke-width="1"/>
<path d="M359 120V128Q358 131 354 131" stroke="#d8a020" fill="none" stroke-width="2"/>
<path d="M382 123H440" stroke="#8ad0d0"/>
<path d="M15 0C18 40 19 80 14 106C15 116 21 118 19 135C18 165 15 190 13 208" fill="none" stroke="#2050d8" stroke-width="1.5"/>
<path d="M30 0C36 30 42 70 38 90C35 105 28 110 29 130C30 165 26 190 24 208" fill="none" stroke="#1838a8" stroke-width="1.5"/>
</svg>
<!-- status -->
<div class="a" style="left:55px;top:735px;width:654px;height:20px;background:#e9e5d2"></div>
<div class="t" style="left:56px;top:739px;color:#3a3a3a;font-size:11px">HB9AAA</div>
<div class="st" style="left:260px;width:22px">RX</div><div class="st" style="left:281px;width:25px">Sq</div><div class="st" style="left:306px;width:28px;color:#a6a28e">AFC</div><div class="st" style="left:334px;width:29px">Lock</div><div class="st" style="left:363px;width:31px;color:#a6a28e">Snap</div><div class="st" style="left:396px;width:55px">1598,0 Hz</div><div class="st" style="left:453px;width:73px">45 bd, 170 Hz</div><div class="st" style="left:528px;width:32px">RTTY</div><div class="st" style="left:561px;width:65px">11/01/2015</div><div class="st" style="left:629px;width:62px">09:36:43 z</div>
<svg class="a" style="left:696px;top:741px" width="12" height="12"><path d="M11 2L2 11M11 6L6 11M11 10L10 11" stroke="#999"/></svg>

<!-- Globe window -->
<div class="a" style="left:778px;top:545px;width:204px;height:217px;background:#0a3cd4;border:1px solid #0830a8"></div>
<div class="a" style="left:779px;top:546px;width:202px;height:21px;background:linear-gradient(#2a78f0,#0a4ae4)"></div>
<div class="cl" style="left:963px;top:552px"></div>
<div class="a" style="left:782px;top:567px;width:196px;height:191px;background:#e8e4d0"></div>
<svg class="a" style="left:782px;top:567px" width="196" height="191">
<defs><radialGradient id="oc" cx=".42" cy=".56" r=".6"><stop offset="0" stop-color="#2a5478"/><stop offset=".45" stop-color="#1c3a56"/><stop offset=".8" stop-color="#121f2e"/><stop offset="1" stop-color="#2c3a2c"/></radialGradient>
<filter id="gb"><feGaussianBlur stdDeviation="1.4"/></filter></defs>
<g transform="translate(-782,-567)">
<ellipse cx="879" cy="665" rx="92" ry="92" fill="url(#oc)" stroke="#5e6034" stroke-width="2.500" stroke-dasharray="3 1"/>
<g filter="url(#gb)">
<path d="M800 640C795 690 815 730 850 750L838 742C815 720 802 680 806 640Z" fill="#5c6a34"/>
<path d="M845 598C880 582 925 590 950 625C935 612 925 605 905 602C895 612 880 600 868 598C858 600 852 600 845 598Z" fill="#525e2c"/>
<path d="M908 608C925 618 935 628 946 645L940 640C930 625 918 618 908 608Z" fill="#7a7c48"/>
<path d="M863 605L890 606L896 618L884 622L872 618Z" fill="#b8a8a8"/>
<path d="M843 624L868 620L892 630L890 658L880 665L868 655L855 640L845 632Z" fill="#5e6a32"/>
<path d="M872 628L892 630L892 650L878 648Z" fill="#7a7644"/>
<path d="M820 640L840 631L855 642L852 660L844 668L845 683L835 682L826 668L817 650Z" fill="#b09478"/>
<path d="M875 708L892 708L892 718L880 722L874 716Z" fill="#b8bcc4"/>
<path d="M850 728C862 732 875 735 885 738L878 752L860 750L848 738Z" fill="#7a6c42"/>
<path d="M882 738L905 745L885 756L870 754Z" fill="#4e5c2a"/>
<path d="M890 662L900 668L898 676L888 670Z" fill="#5c6232"/>
</g>
<path d="M843 626L879 665" stroke="#1ea81e" stroke-width="2.800"/>
<g font-family="Liberation Sans" font-weight="bold" font-size="13" fill="#f0e890" stroke="#111" stroke-width="2" paint-order="stroke" text-anchor="middle"><text x="879" y="682">HB</text><text x="877" y="698">EU-14-28</text><text x="877" y="714">317°</text></g>
</g></svg>

<!-- Fq window -->
<div class="a" style="left:1057px;top:541px;width:172px;height:77px;background:#0a3cd4;border:1px solid #0830a8"></div>
<div class="a" style="left:1058px;top:542px;width:170px;height:21px;background:linear-gradient(#2a78f0,#0a4ae4)"></div>
<div class="cl" style="left:1210px;top:546px"></div>
<div class="a" style="left:1061px;top:563px;width:164px;height:51px;background:#e8e4d0"></div>
<div class="t" style="left:1064px;top:567px;color:#222;font-size:12px"><u>F</u>q:</div>
<div class="a" style="left:1083px;top:564px;width:82px;height:19px;background:#fff;border:1px solid;border-color:#888 #eee #eee #888"></div>
<div class="t" style="left:1085px;top:566px;color:#222;font-size:11.5px">21.080.000</div>
<div class="a" style="left:1147px;top:565px;width:17px;height:17px;background:#e6e2ce;border:1px solid;border-color:#fff #666 #666 #fff"></div>
<div class="a" style="left:1151px;top:572px;border:4px solid transparent;border-top:4px solid #111"></div>
<div class="a" style="left:1168px;top:564px;width:55px;height:19px;background:#fff;border:1px solid;border-color:#888 #eee #eee #888"></div>
<div class="t" style="left:1171px;top:567px;color:#222;font-size:11.5px">RTTY</div>
<div class="a" style="left:1205px;top:565px;width:17px;height:17px;background:#e6e2ce;border:1px solid;border-color:#fff #666 #666 #fff"></div>
<div class="a" style="left:1209px;top:572px;border:4px solid transparent;border-top:4px solid #111"></div>
<div class="a" style="left:1101px;top:588px;width:83px;height:26px;background:#157a6c"></div>
<svg class="a" style="left:1103px;top:590px" width="80" height="22"><path d="M1 11L9 3V19ZM11 11L19 3V19ZM21 11L29 3V19ZM31 11L39 3V19ZM41 3L49 11L41 19ZM51 3L59 11L51 19ZM61 3L69 11L61 19ZM71 3L79 11L71 19Z" fill="#c4c6b4"/></svg>

<!-- Scope window -->
<div class="a" style="left:1085px;top:641px;width:172px;height:114px;background:#0a3cd4;border:1px solid #0830a8"></div>
<div class="a" style="left:1086px;top:642px;width:170px;height:21px;background:linear-gradient(#2a78f0,#0a4ae4)"></div>
<div class="cl" style="left:1238px;top:647px"></div>
<div class="a" style="left:1089px;top:663px;width:164px;height:89px;background:#e8e4d0"></div>
<div class="a" style="left:1093px;top:667px;width:59px;height:59px;background:#000"></div>
<svg class="a" style="left:1093px;top:667px" width="59" height="59"><path d="M13 11V17M48 19h1M14 42v5h3M48 46l-3 4M51 42v2" stroke="#e8e8a0" fill="none"/></svg>
<div class="a" style="left:1165px;top:664px;width:85px;height:11px;border:1px solid #c2bea8;background:#e2decb"></div>
<div class="t" style="left:1165px;top:676px;color:#aaa694;font-size:11.5px">0  copy %</div>
<div class="t" style="left:1231px;top:676px;color:#aaa694;font-size:11.5px">100</div>
<div class="a" style="left:1165px;top:693px;width:85px;height:11px;border:1px solid #c2bea8;background:#e2decb"></div>
<div class="a" style="left:1167px;top:695px;width:12px;height:7px;background:#3060c8"></div>
<div class="t" style="left:1163px;top:706px;color:#222;font-size:11.5px">0</div>
<div class="t" style="left:1192px;top:706px;color:#222;font-size:11.5px">| s/n |</div>
<div class="t" style="left:1239px;top:706px;color:#222;font-size:11.5px">60</div>
<div class="a" style="left:1165px;top:723px;width:85px;height:11px;border:1px solid #c2bea8;background:#e2decb"></div>
<div class="t" style="left:1163px;top:735px;color:#222;font-size:11.5px">0</div>
<div class="t" style="left:1186px;top:735px;color:#222;font-size:11.5px">| i  | m |</div>
<div class="t" style="left:1232px;top:735px;color:#222;font-size:11.5px">-40</div>
<div class="t" style="left:1093px;top:733px;color:#aaa694;font-size:12px">RST: 599</div>

<!-- Taskbar -->
<div class="a" style="left:0;top:770px;width:1280px;height:30px;background:linear-gradient(#2c6ee6,#245edc 12%,#2460dc 80%,#1c4cbc)"></div>
<div class="a" style="left:0;top:770px;width:97px;height:30px;border-radius:0 10px 10px 0;background:linear-gradient(#54a854,#3c8e3c 20%,#379137 70%,#2e6e2e)"></div>
<svg class="a" style="left:10px;top:777px" width="18" height="17"><path d="M1 3Q4 1 8 3L7 8Q4 6 0 8Z" fill="#e8502a"/><path d="M9 3Q12 5 16 3L15 8Q12 10 8 8Z" fill="#7ac040"/><path d="M0 9Q4 7 7 9L6 14Q3 12 -1 14Z" fill="#4080e8"/><path d="M8 9Q11 11 15 9L14 14Q11 16 7 14Z" fill="#f0c830"/></svg>
<div class="t" style="left:33px;top:775px;color:#fff;font:italic bold 18px/20px 'Liberation Sans',sans-serif">start</div>
<div class="a" style="left:104px;top:776px;width:3px;height:20px;background:repeating-linear-gradient(#153a9c 0 2px,#5a8cec 2px 4px)"></div>
<div class="task" style="left:116px;width:158px;padding-left:29px">hidden song - Penelu...</div>
<div class="a" style="left:124px;top:777px;width:16px;height:17px;border-radius:50%;background:#d82020;border:3px solid #e04030"></div>
<div class="a" style="left:130px;top:780px;width:4px;height:11px;border-radius:2px;background:#f4d0c8"></div>
<div class="task" style="left:278px;width:158px;padding-left:28px">QRZ Callsign Database</div>
<div class="a" style="left:286px;top:778px;width:15px;height:15px;background:#a02020;border:1px solid #222"></div>
<div class="a" style="left:290px;top:787px;width:11px;height:6px;background:#e8e880"></div>
<div class="task" style="left:441px;width:156px;padding-left:28px">Mix W  Logger.doc - ...</div>
<div class="a" style="left:447px;top:778px;width:14px;height:15px;background:#eef2fc;border:1px solid #335"></div>
<div class="a" style="left:449px;top:780px;width:8px;height:7px;background:#2a50b8"></div>
<div class="task" style="left:601px;width:147px;padding-left:25px;background:#1e52b7;box-shadow:inset 1px 1px 2px #102a70">YB0NDT - Current log...</div>
<svg class="a" style="left:606px;top:778px" width="16" height="16"><use href="#bf"/></svg>
<div class="a" style="left:1187px;top:770px;width:93px;height:30px;background:linear-gradient(#20a0f0,#108ee6 20%,#0e88de 80%,#0c6cc0)"></div>
<div class="a" style="left:1178px;top:776px;width:19px;height:19px;border-radius:50%;background:radial-gradient(circle at 40% 35%,#a8d4fc,#3a78d8);border:1px solid #dde"></div>
<svg class="a" style="left:1182px;top:780px" width="11" height="11"><path d="M7 1L3 5.500L7 10" fill="none" stroke="#fff" stroke-width="2"/></svg>
<div class="a" style="left:1199px;top:780px;width:11px;height:9px;background:#445;border:1px solid #aac"></div>
<svg class="a" style="left:1206px;top:773px" width="12" height="10"><path d="M1 8Q4 5 1 2M5 9Q9 5 5 1" fill="none" stroke="#dff" stroke-width="1"/></svg>
<svg class="a" style="left:1216px;top:776px" width="17" height="19"><path d="M1 6Q8 0 16 6M3 9Q8 5 14 9M5 12Q8 9 12 12" fill="none" stroke="#48e038" stroke-width="2"/><path d="M8.500 18L5 14H12Z" fill="#38c030"/></svg>
<div class="t" style="left:1238px;top:778px;color:#e6f0ff;font-size:12px">16:36</div>
</body></html>
